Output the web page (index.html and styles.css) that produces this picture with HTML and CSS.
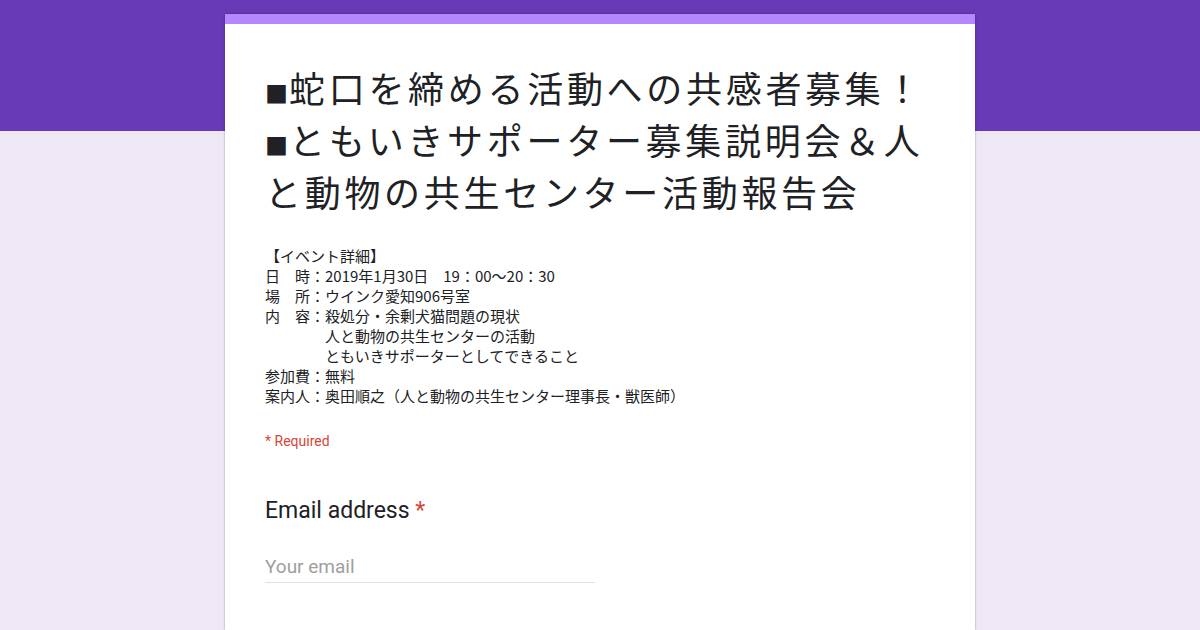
FILE: index.html
```html
<!DOCTYPE html>
<html>
  <head>
    <meta charset="UTF-8">
    <title>■蛇口を締める活動への共感者募集！</title>
    <link rel="stylesheet" href="styles.css">
  </head>
  <body>
    <div class="page">
      <form class="card">
        <h1 class="title"><span class="mark">■</span>蛇口を締める活動への共感者募集！<br><span class="mark">■</span>ともいきサポーター募集説明会＆人と動物の共生センター活動報告会</h1>
        <div class="details">
          【イベント詳細】<br>
          日　時：2019年1月30日　19：00～20：30<br>
          場　所：ウインク愛知906号室<br>
          内　容：殺処分・余剰犬猫問題の現状<br>
          　　　　人と動物の共生センターの活動<br>
          　　　　ともいきサポーターとしてできること<br>
          参加費：無料<br>
          案内人：奥田順之（人と動物の共生センター理事長・獣医師）
        </div>
        <div class="required">* Required</div>
        <div class="question">
          <label class="question-label">Email address <span class="star">*</span></label>
          <input type="text" class="answer" placeholder="Your email">
        </div>
      </form>
    </div>
  </body>
</html>
```

FILE: styles.css
```css
* {
  box-sizing: border-box;
}
html, body {
  margin: 0;
  padding: 0;
}
body {
  width: 1200px;
  height: 630px;
  overflow: hidden;
  font-family: Roboto, "Noto Sans CJK JP", sans-serif;
  color: #202124;
  background: linear-gradient(#673ab7 0, #673ab7 131px, #ede7f6 131px);
}
.page {
  display: flex;
  justify-content: center;
  padding-top: 14px;
}
.card {
  width: 750px;
  min-height: 616px;
  background-color: #FFFFFF;
  border-top: 10px solid #b388ff;
  box-shadow: 0px 0px 2px 0px rgba(0, 0, 0, 0.35);
  padding: 37px 40px 0px 40px;
}
.title {
  margin: 0px;
  font-family: "Noto Sans CJK JP", sans-serif;
  font-size: 36px;
  line-height: 52px;
  font-weight: normal;
  letter-spacing: 3.7px;
  color: #202124;
}
.title .mark {
  font-size: 23px;
  line-height: 1;
  letter-spacing: 1px;
}
.details {
  margin-top: 29px;
  font-family: "Noto Sans CJK JP", sans-serif;
  font-size: 15px;
  line-height: 20px;
  white-space: nowrap;
  color: #202124;
}
.required {
  margin-top: 25px;
  font-size: 14px;
  line-height: 20px;
  color: #db4437;
}
.question {
  display: flex;
  flex-direction: column;
  margin-top: 46px;
}
.question-label {
  font-size: 23px;
  line-height: 28px;
  color: #202124;
}
.star {
  color: #db4437;
}
.answer {
  width: 330px;
  height: 32px;
  margin-top: 26px;
  padding: 0px;
  border: none;
  border-bottom: 1px solid #e0e0e0;
  font-family: Roboto, sans-serif;
  font-size: 19px;
  color: #202124;
  background: transparent;
}
.answer::placeholder {
  color: #9e9e9e;
}
.answer:focus {
  outline: none;
}
```
